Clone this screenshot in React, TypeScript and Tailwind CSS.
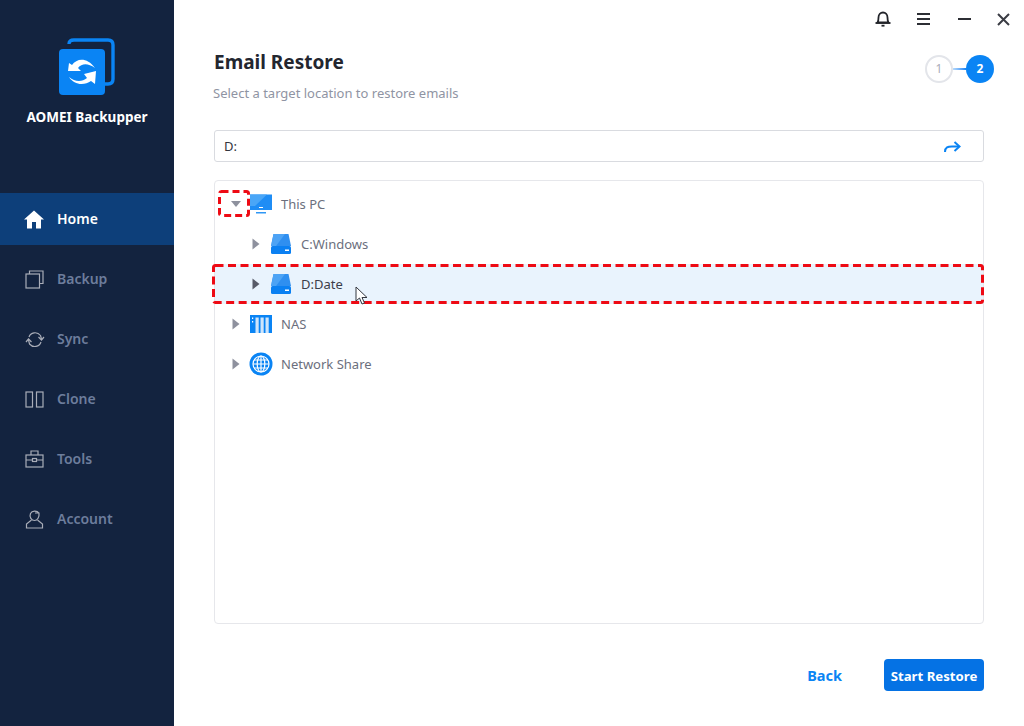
import React from 'react';

const font = { fontFamily: '"Noto Sans", "Open Sans", sans-serif' };

const Logo = () => (
  <svg width="58" height="58" viewBox="0 0 58 58" fill="none">
    <path d="M11 6 Q11 2 16 2 H50 Q55 2 55 7 V41 Q55 46 50 46 H46" stroke="#0a84f4" strokeWidth="3.4" fill="none" />
    <rect x="1" y="11" width="46" height="46" rx="4" fill="#0a84f4" />
    <path d="M10 33 L11 25 L14 27 C19 20 29 19 37 30 C30 25 24 25 20 30 L23 33 Z" fill="#fff" />
    <path d="M11 39 C17 44 24 44 29 40 L26 36 L38 33 L37 46 L33 43 C26 48 16 47 11 39 Z" fill="#fff" />
  </svg>
);

const HomeIcon = () => (
  <svg width="20" height="19" viewBox="0 0 20 19"><path d="M10 0.5 L20 9.5 H17 V18.5 H12 V12 H8 V18.5 H3 V9.5 H0 Z" fill="#fff" /></svg>
);
const BackupIcon = () => (
  <svg width="19" height="19" viewBox="0 0 19 19" fill="none" stroke="#a9adb8" strokeWidth="1.2"><rect x="1" y="4" width="13.5" height="14" /><path d="M4.5 4 V1 H18 V13.5 H14.5" /></svg>
);
const SyncIcon = () => (
  <svg width="20" height="19" viewBox="0 0 20 19" fill="none" stroke="#a9adb8" strokeWidth="1.2"><path d="M4 7 C5.5 2.5 12 1 15.5 5.5 L16.5 9" /><path d="M13.5 7 L16.5 10 L19 7" /><path d="M16 12 C14.5 17 8 18 4.5 14 L3.5 10" /><path d="M1 12 L3.5 9 L6.5 12" /></svg>
);
const CloneIcon = () => (
  <svg width="19" height="17" viewBox="0 0 19 17" fill="none" stroke="#a9adb8" strokeWidth="1.2"><rect x="1" y="1" width="6.5" height="15" /><rect x="11.5" y="1" width="6.5" height="15" /></svg>
);
const ToolsIcon = () => (
  <svg width="19" height="18" viewBox="0 0 19 18" fill="none" stroke="#a9adb8" strokeWidth="1.2"><rect x="1" y="5" width="17" height="12" /><path d="M6 5 V1 H13 V5 M1 10 H7.5 M11.5 10 H18" /><rect x="7.5" y="8.5" width="4" height="3" /></svg>
);
const AccountIcon = () => (
  <svg width="19" height="19" viewBox="0 0 19 19" fill="none" stroke="#a9adb8" strokeWidth="1.2"><path d="M14 3 C12 0.5 7 0.5 5.5 3.5 C4 7 6.5 10.5 9.5 10.5 C12.5 10.5 14.5 7 14 3 H10" /><path d="M6.5 10 L1.5 14 V18 H17.5 V14 L12.5 10" /></svg>
);

const Bell = () => (
  <svg width="16" height="16" viewBox="0 0 16 16" fill="none" stroke="#23252b" strokeWidth="1.8"><path d="M2.5 11.5 C3.5 10 3.5 9 3.5 6.5 C3.5 3.5 5.5 1.5 8 1.5 C10.5 1.5 12.5 3.5 12.5 6.5 C12.5 9 12.5 10 13.5 11.5 Z" /><path d="M0.5 12 H15.5" /><path d="M6.5 14.7 H9.5" /></svg>
);
const Menu = () => (
  <svg width="13" height="12" viewBox="0 0 13 12" fill="#2c2e34"><rect width="13" height="2" /><rect y="5" width="13" height="2" /><rect y="10" width="13" height="2" /></svg>
);
const Minus = () => (
  <svg width="13" height="3" viewBox="0 0 13 3" fill="#2c2e34"><rect width="13" height="2" /></svg>
);
const Close = () => (
  <svg width="13" height="13" viewBox="0 0 13 13" stroke="#3a3c44" strokeWidth="2" fill="none"><path d="M1 1 L12 12 M12 1 L1 12" /></svg>
);

const Arrow = ({ down = false, dark = false }: { down?: boolean; dark?: boolean }) => (
  <svg width="10" height="12" viewBox="0 0 10 12">
    {down ? <path d="M0 3 H10 L5 9 Z" fill="#8e919e" /> : <path d="M1.5 0.5 L8.5 6 L1.5 11.5 Z" fill={dark ? '#575a68' : '#8e919e'} />}
  </svg>
);

const Pc = () => (
  <svg width="24" height="20" viewBox="0 0 24 20"><rect x="1" y="0.5" width="22" height="15.5" fill="#1f8df5" /><path d="M1 0.5 H18 L6 12 H1 Z" fill="#4aa6f7" /><rect x="10" y="13" width="4" height="1" fill="#fff" /><rect x="7" y="18" width="10" height="1.5" fill="#2f97f5" /></svg>
);
const Disk = () => (
  <svg width="22" height="22" viewBox="0 0 22 22"><path d="M3.5 1 H18.5 L21 13 H1 Z" fill="#2f8ff0" /><path d="M3.5 1 H15 L6 13 H1 Z" fill="#4da3f5" /><rect x="1" y="13" width="20" height="8" rx="1.5" fill="#0b80f2" /><rect x="15" y="16.5" width="4" height="1.5" fill="#fff" /></svg>
);
const Nas = () => (
  <svg width="22" height="18" viewBox="0 0 22 18"><rect width="22" height="18" fill="#0a84f4" /><rect x="5.5" y="2.5" width="3.2" height="15.5" fill="#cfe5fb" /><rect x="10.5" y="2.5" width="3.2" height="15.5" fill="#cfe5fb" /><rect x="15.5" y="2.5" width="3.2" height="15.5" fill="#cfe5fb" /><rect x="2" y="2.5" width="1.2" height="1.5" fill="#fff" /><rect x="2" y="6" width="1.2" height="1.5" fill="#fff" /></svg>
);
const Globe = () => (
  <svg width="24" height="24" viewBox="0 0 24 24" fill="none"><circle cx="12" cy="12" r="11.5" fill="#0a84f4" /><g stroke="#fff" strokeWidth="1.2"><circle cx="12" cy="12" r="8" /><ellipse cx="12" cy="12" rx="3.8" ry="8" /><path d="M12 4 V20 M4 12 H20 M5 8 H19 M5 16 H19" /></g></svg>
);

const nav = [
  { label: 'Backup', icon: <BackupIcon /> },
  { label: 'Sync', icon: <SyncIcon /> },
  { label: 'Clone', icon: <CloneIcon /> },
  { label: 'Tools', icon: <ToolsIcon /> },
  { label: 'Account', icon: <AccountIcon /> },
];

const Row = ({ arrow, icon, label, indent = false, active = false }: { arrow: React.ReactNode; icon: React.ReactNode; label: string; indent?: boolean; active?: boolean }) => (
  <div className={`h-[40px] flex items-center ${indent ? 'pl-[36px]' : 'pl-[16px]'} ${active ? 'bg-[#e9f3fd]' : ''}`}>
    <div className="w-[18px] flex items-center">{arrow}</div>
    <div className="w-[24px] flex justify-center">{icon}</div>
    <span className={`ml-[8px] mt-[2px] text-[13px] ${active ? 'text-[#3b3e4a]' : 'text-[#6b6f7d]'}`}>{label}</span>
  </div>
);

export default function App() {
  return (
    <div className="w-[1024px] h-[726px] flex bg-white overflow-hidden relative" style={font}>
      <aside className="w-[174px] h-full bg-[#13233f] shrink-0 flex flex-col">
        <div className="pt-[38px] flex flex-col items-center h-[193px]">
          <div><Logo /></div>
          <div className="mt-[11px] text-[13.5px] font-bold text-white">AOMEI Backupper</div>
        </div>
        <div className="h-[52px] bg-[#0d3f7a] flex items-center pl-[24px]">
          <div className="w-[33px]"><HomeIcon /></div>
          <span className="text-[14px] -mt-[2px] font-semibold text-white">Home</span>
        </div>
        <div className="flex flex-col">
          {nav.map((n) => (
            <div key={n.label} className="h-[52px] mt-[8px] flex items-center pl-[25px]">
              <div className="w-[32px]">{n.icon}</div>
              <span className="text-[14px] -mt-[2px] font-semibold text-[#6d7d9c]">{n.label}</span>
            </div>
          ))}
        </div>
      </aside>

      <main className="flex-1 flex flex-col pl-[40px] pr-[40px]">
        <div className="h-[38px] -mr-[40px] pr-[14px] flex items-center justify-end">
          <div className="flex items-center gap-[26px]">
            <Bell />
            <div className="mr-[2px]"><Menu /></div>
            <Minus />
            <Close />
          </div>
        </div>

        <div className="flex justify-between h-[92px]">
          <div>
            <h1 className="text-[19px] leading-[24px] mt-[12px] font-bold text-[#23262f]">Email Restore</h1>
            <p className="text-[13px] leading-[18px] mt-[10px] -ml-[1px] text-[#8f94a3]">Select a target location to restore emails</p>
          </div>
          <div className="flex items-center h-[28px] mt-[17px] -mr-[10px]">
            <div className="w-[28px] h-[28px] rounded-full border-2 border-[#e3e5ea] flex items-center justify-center text-[12px] text-[#a9acb8]">1</div>
            <div className="w-[13px] h-[2px] bg-gradient-to-r from-[#b7dafb] to-[#0a84f4]" />
            <div className="w-[28px] h-[28px] rounded-full bg-[#0a84f4] flex items-center justify-center text-[12px] font-bold text-white">2</div>
          </div>
        </div>

        <div className="h-[32px] rounded-[3px] border border-[#d9dbe0] flex items-center justify-between pl-[9px] pr-[22px]">
          <span className="text-[13px] mt-[2px] text-[#33353d]">D:</span>
          <svg className="mt-[1px]" width="17" height="12" viewBox="0 0 17 12" fill="none" stroke="#0a84f4" strokeWidth="2"><path d="M1 11 C1 6 4 5.5 8 5.5 H15" /><path d="M10.5 1 L15.5 5.5 L10.5 10" /></svg>
        </div>

        <div className="mt-[18px] h-[444px] rounded-[4px] border border-[#e6e7eb] pt-[3px]">
          <Row arrow={<Arrow down />} icon={<Pc />} label="This PC" />
          <Row indent arrow={<Arrow />} icon={<Disk />} label="C:Windows" />
          <Row indent active arrow={<Arrow dark />} icon={<Disk />} label="D:Date" />
          <Row arrow={<Arrow />} icon={<Nas />} label="NAS" />
          <Row arrow={<Arrow />} icon={<Globe />} label="Network Share" />
        </div>

        <div className="flex justify-end items-center mt-[35px]">
          <button className="text-[14.5px] font-bold text-[#0a84f4] mr-[42px] pt-[2px]">Back</button>
          <button className="w-[100px] h-[32px] rounded-[4px] bg-[#0572e4] text-[13.2px] font-bold text-white pt-[3px]">Start Restore</button>
        </div>
      </main>

      {/* annotation marks over the screenshot */}
      <svg className="absolute left-[216px] top-[188px]" width="36" height="31" fill="none">
        <rect x="3.5" y="3.5" width="29" height="24" rx="2" stroke="#ee0a14" strokeWidth="3" strokeDasharray="7 4" />
      </svg>
      <svg className="absolute left-[210px] top-[261px]" width="776" height="45" fill="none">
        <rect x="3.5" y="4.5" width="769" height="37" rx="2" stroke="#ee0a14" strokeWidth="3" strokeDasharray="8 4.5" />
      </svg>
      <svg className="absolute left-[355px] top-[286px]" width="14" height="20" viewBox="0 0 14 20"><path d="M1 1 V15 L4.5 12 L7 18 L9.5 17 L7 11.5 L12 11.5 Z" fill="#fff" stroke="#33363f" strokeWidth="1" /></svg>
    </div>
  );
}
